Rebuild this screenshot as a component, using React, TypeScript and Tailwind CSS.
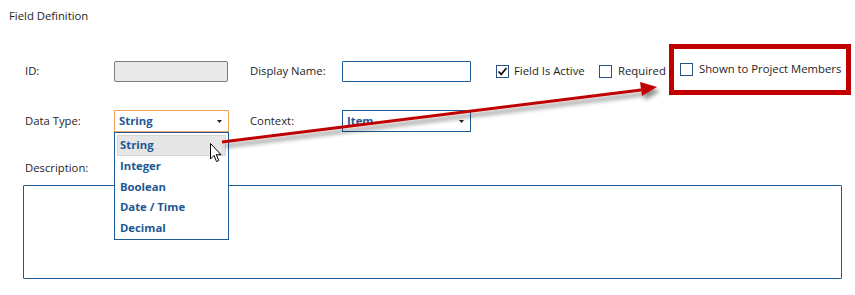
import React from 'react';

const Check = ({ checked = false }: { checked?: boolean }) => (
    <span className="w-[13px] h-[13px] border border-[#2a4f80] bg-white flex items-center justify-center shrink-0">
        {checked && (
            <svg width="11" height="11" viewBox="0 0 11 11">
                <path d="M1.5 5.5 L4.2 8.3 L9.5 2" stroke="#111" strokeWidth="1.8" fill="none" />
            </svg>
        )}
    </span>
);

const Caret = () => (
    <svg width="5" height="3" viewBox="0 0 5 3" className="shrink-0">
        <path d="M0 0 L5 0 L2.5 3 Z" fill="#222" />
    </svg>
);

const types = ['String', 'Integer', 'Boolean', 'Date / Time', 'Decimal'];

export default function App() {
    return (
        <div className="relative w-[855px] h-[295px] bg-white overflow-hidden whitespace-nowrap font-['Open_Sans',sans-serif] text-[11.3px] text-[#1e1e1e]">
            <div className="pl-[9px] pt-[8px] h-[24px] leading-[16px]">Field Definition</div>

            {/* row 1 */}
            <div className="mt-[37px] pl-[25px] flex items-center h-[21px]">
                <span className="w-[89px]">ID:</span>
                <div className="w-[114px] h-[21px] bg-[#e9e9e9] border border-[#7d7d7d] rounded-[2px]" />
                <span className="ml-[22px] w-[92px]">Display Name:</span>
                <div className="w-[129px] h-[21px] border border-[#1e5a96] rounded-[1px]" />
                <div className="ml-[25px] w-[103px] flex items-center gap-[5px]">
                    <Check checked />
                    <span>Field Is Active</span>
                </div>
                <div className="w-[70px] flex items-center gap-[6px]">
                    <Check />
                    <span>Required</span>
                </div>
                <div className="-mt-[5px] w-[182px] h-[51px] border-[5px] border-[#c00000] flex items-center pl-[6px] gap-[6px]">
                    <Check />
                    <span>Shown to Project Members</span>
                </div>
            </div>

            {/* row 2 */}
            <div className="mt-[28px] pl-[25px] flex items-center h-[22px]">
                <span className="w-[89px]">Data Type:</span>
                <div className="relative w-[115px] h-[22px] border border-[#f0a35e] flex items-center justify-between pl-[4px] pr-[6px] font-bold text-[#1d5794]">
                    <span>String</span>
                    <Caret />
                    <div className="absolute left-[-1px] top-[21px] w-[115px] h-[108px] bg-white border border-[#1e5a96] pt-[2px] px-[2px] flex flex-col z-10">
                        {types.map((t, i) => (
                            <div
                                key={t}
                                className={`h-[21px] flex items-center pl-[2px] ${i === 0 ? 'bg-[#e6e6e6] border border-[#d6d6d6]' : 'border border-transparent'}`}
                            >
                                {t}
                            </div>
                        ))}
                    </div>
                </div>
                <span className="ml-[21px] w-[92px]">Context:</span>
                <div className="w-[129px] h-[22px] border border-[#1e5a96] flex items-center justify-between pl-[4px] pr-[6px] font-bold text-[#1d5794]">
                    <span>Item</span>
                    <Caret />
                </div>
            </div>

            <div className="mt-[28px] pl-[25px] leading-[16px]">Description:</div>
            <div className="mt-[9px] ml-[23px] w-[819px] h-[94px] border border-[#1e5a96] rounded-[1px]" />

            {/* annotation arrow */}
            <svg className="absolute inset-0 pointer-events-none z-20" width="855" height="295">
                <defs>
                    <filter id="sh" x="-10%" y="-50%" width="120%" height="200%">
                        <feDropShadow dx="3" dy="4" stdDeviation="2" floodColor="#000" floodOpacity="0.45" />
                    </filter>
                </defs>
                <g filter="url(#sh)">
                    <path d="M222 142 L641 90" stroke="#c00000" strokeWidth="3" fill="none" />
                    <polygon points="657,87 642,96 640,82" fill="#c00000" />
                </g>
            </svg>

            {/* mouse cursor */}
            <svg className="absolute left-[210px] top-[143px] z-30" width="13" height="20" viewBox="0 0 13 20">
                <path d="M0.5 0.5 L0.5 16 L4 12.5 L6.5 18.5 L8.8 17.5 L6.3 11.7 L11 11.7 Z" fill="#fff" stroke="#000" strokeWidth="1" strokeLinejoin="round" />
            </svg>
        </div>
    );
}
